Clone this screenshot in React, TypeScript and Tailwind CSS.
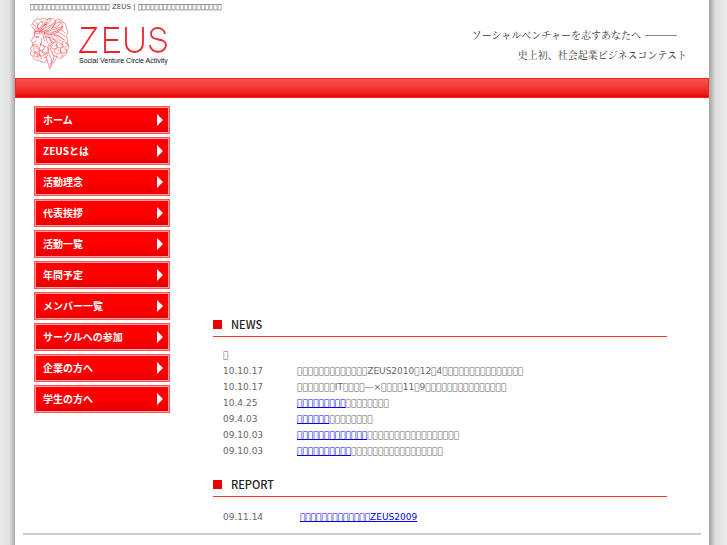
import React from 'react';

// Private use code point, drawn as an empty box
const BOX = '\uE900';
const box = (count: number) => BOX.repeat(count);

const menuItems = [
    'ホーム',
    'ZEUSとは',
    '活動理念',
    '代表挨拶',
    '活動一覧',
    '年間予定',
    'メンバー一覧',
    'サークルへの参加',
    '企業の方へ',
    '学生の方へ',
];

interface Entry {
    date: string;
    lead?: string;
    link?: string;
    text?: string;
}

const news: Entry[] = [
    { date: BOX },
    { date: '10.10.17', text: `${box(13)}ZEUS2010${BOX}12${BOX}4${box(15)}` },
    { date: '10.10.17', text: `${box(7)}IT${box(4)}―×${box(4)}11${BOX}9${box(15)}` },
    { date: '10.4.25', link: box(9), text: box(8) },
    { date: '09.4.03', link: box(6), text: box(8) },
    { date: '09.10.03', link: box(13), text: box(17) },
    { date: '09.10.03', link: box(10), text: box(17) },
];

const report: Entry[] = [{ date: '09.11.14', lead: '\u00a0', link: `${box(13)}ZEUS2009` }];

const ZeusHead: React.FC = () => (
    <svg viewBox="0 0 40 52" className="h-[52px] w-10 shrink-0" fill="none" stroke="#f4484c" strokeWidth="0.6" strokeLinecap="round" strokeLinejoin="round">
        {/* face */}
        <path d="M5 12c-1 2 0 4-1 6l-3 5c0 1 2 1 2 2l-1 2 2 1M4 17c2-2 4-2 7-1M5 19c2-1 3-1 4 0-1 1-3 1-4 0M4 24c1 0 2 0 2-1M2 27c2-1 4-1 6 1M11 20c1 2 1 4 0 6" />
        {/* outline of the hair */}
        <path d="M5 12C1 10 1 5 4 4c0-3 4-4 6-2 2-3 6-2 7 0 2-3 7-2 8 1 3-3 8-1 8 2 4 0 3 4 3 6 3 2 2 5 0 7 2 3 2 5 1 7" />
        {/* laurel */}
        <path d="M5 14c6-1 9-6 12-10 0 5-4 9-12 10M9 14c7 0 12-5 17-11-1 6-8 12-17 11M14 15c7 1 13-1 19-7-3 7-12 11-19 7M8 11C7 7 9 4 13 3c0 4-2 7-5 8M14 7c0-3 3-6 7-6-1 4-4 6-7 6M22 10c1-3 5-6 9-6-1 4-5 6-9 6" />
        <path d="M5 14L16 6M9 14l15-9M14 15l17-6M3 6c2 1 3 3 3 5M6 4c2 2 2 4 1 6M26 12c3-1 7 0 9 3M23 14c4-1 9 1 12 5M20 16c5 0 10 2 14 6M29 3c3 2 4 5 3 8" />
        {/* locks */}
        <path d="M12 15c3 2 0 5 3 8M14 16c4 2 1 6 4 9M17 17c4 1 2 6 5 8M20 17c4 1 3 5 6 7M24 17c4 1 3 5 7 6M27 17c4 1 3 4 8 5M14 20c3-2 6-1 7 2s5 3 7 1M18 19c4 0 5 4 9 3" />
        {/* beard */}
        <path d="M4 28c-4 0-5 4-2 5-3 1-2 5 1 5 0 3 3 5 6 4 2 3 7 3 8 0M8 28c-4 0-6 5-2 6s5-5 1-4M10 27c4-1 6 3 3 5s-6-1-3-3M6 34c-3 1-3 5 1 5s4-5 0-3M11 32c-3 2-2 6 1 6s5-4 1-4M14 28c4 0 6 4 3 7s-6 0-4-3M16 34c3 2 1 6-2 6M3 34c3 0 4 2 5 5M8 37c3 0 4 3 3 5M12 24c-2 1-2 3-1 4" />
        {/* curls on the shoulder */}
        <path d="M24 25c-4 0-4 6 0 6s5-5 1-4M29 24c-4 1-3 6 1 6s4-6 0-4M34 23c-4 1-3 6 1 6s4-5 0-4M27 30c-4 1-3 6 1 6s4-5 0-4M33 29c-4 1-3 6 1 6s4-5 0-4M37 25c3 2 2 7-1 7 2 3 0 6-3 6-1 3-5 3-6 0-3 1-5-1-5-4M22 24c-3 3-3 8 1 11M30 34c2 1 3 3 2 5" />
        {/* neck */}
        <path d="M16 38c1 4 2 8 4 13 1-5 4-6 7-12M19 26c-2 4-1 9 1 12M20 38c2 3 2 7 0 10M24 37c0 3-1 6-3 9" />
    </svg>
);

const EntryTable: React.FC<{ entries: Entry[] }> = ({ entries }) => (
    <table className="ml-[10px] text-left text-[9px] leading-4 text-[#666]">
        <tbody>
            {entries.map((entry, i) => (
                <tr key={i}>
                    <td className="w-[74px]">{entry.date}</td>
                    <td className="whitespace-nowrap">
                        {entry.lead}
                        {entry.link && (
                            <a href="#" className="text-[#0000ee] underline [text-decoration-skip-ink:none]">
                                {entry.link}
                            </a>
                        )}
                        {entry.text}
                    </td>
                </tr>
            ))}
        </tbody>
    </table>
);

const SectionTitle: React.FC<{ children: React.ReactNode }> = ({ children }) => (
    <h2 className="flex items-center gap-[9px] border-b border-[#f33] pb-1 font-['Noto_Sans_CJK_JP',sans-serif] text-[11px] leading-4 font-medium text-[#222]">
        <span className="size-[9px] bg-[#e00]" />
        {children}
    </h2>
);

const App: React.FC = () => {
    return (
        <div className="flex min-h-screen bg-[#ebebeb] font-['DejaVu_Sans',sans-serif]">
            <div className="w-[15px] shrink-0 bg-linear-to-r from-[#ececec] via-[#dedede] via-65% to-[#a8a8a8]" />
            <div className="min-w-0 flex-1 bg-white">
                <header>
                    <h1 className="pt-[2px] pl-[15px] text-[7px] leading-[10px] text-[#444]">
                        {box(19)} ZEUS | {box(20)}
                    </h1>
                    <div className="flex items-start justify-between pt-[6px] pr-[22px] pb-2 pl-[15px]">
                        <a href="#" className="flex gap-[9px]">
                            <ZeusHead />
                            <span className="font-['Liberation_Sans',sans-serif]">
                                <svg viewBox="0 0 88 26" className="mt-[9px] h-[26px] w-[88px]" fill="none" stroke="#f0242a" strokeWidth="1.8" role="img" aria-label="ZEUS">
                                    <path d="M2 1h15L1 25h17M40 1H26v24h15M27 13h12M47 0v16c0 12 17 12 17 0V0M86 7c-1-8-14-8-14 0 0 8 15 3 15 11 0 9-16 9-16 0" />
                                </svg>
                                <span className="block text-[7px] leading-4 text-[#111]">Social Venture Circle Activity</span>
                            </span>
                        </a>
                        <p className="pt-[7px] text-right font-['Noto_Serif_CJK_JP','Noto_Sans_CJK_JP',serif] text-[10px] leading-5 text-[#333]">
                            <span className="flex items-center gap-1 pr-[10px]">
                                ソーシャルベンチャーを志すあなたへ
                                <span className="h-px w-8 bg-[#888]" />
                            </span>
                            史上初、社会起業ビジネスコンテスト
                        </p>
                    </div>
                    <div className="h-5 border border-[#f22] bg-linear-to-b from-[#fb5050] to-[#e60000]" />
                </header>

                <div className="flex pt-2">
                    <nav className="ml-[19px] flex w-[136px] shrink-0 flex-col gap-[3px]">
                        {menuItems.map((item) => (
                            <a
                                key={item}
                                href="#"
                                className="flex h-7 items-center justify-between border border-[#f55] bg-linear-to-b from-[#ff0000] from-50% to-[#e60000] pr-[6px] pl-2 font-['Noto_Sans_CJK_JP',sans-serif] text-[10px] leading-4 font-bold text-white inset-ring inset-ring-[#ffa0a0]"
                            >
                                {item}
                                <svg viewBox="0 0 6 12" className="h-3 w-[6px]" fill="white">
                                    <path d="M0 0l6 6-6 6z" />
                                </svg>
                            </a>
                        ))}
                    </nav>
                    <main className="mr-[42px] ml-[43px] min-w-0 flex-1 pt-[210px]">
                        <section>
                            <SectionTitle>NEWS</SectionTitle>
                            <div className="pt-[10px]">
                                <EntryTable entries={news} />
                            </div>
                        </section>
                        <section className="pt-[17px]">
                            <SectionTitle>REPORT</SectionTitle>
                            <div className="pt-3">
                                <EntryTable entries={report} />
                            </div>
                        </section>
                    </main>
                </div>
                <hr className="mx-2 mt-2 border-t-2 border-[#ccc]" />
            </div>
            <div className="w-[18px] shrink-0 bg-linear-to-l from-[#ececec] via-[#dedede] via-65% to-[#a0a0a0]" />
        </div>
    );
};

export default App;
